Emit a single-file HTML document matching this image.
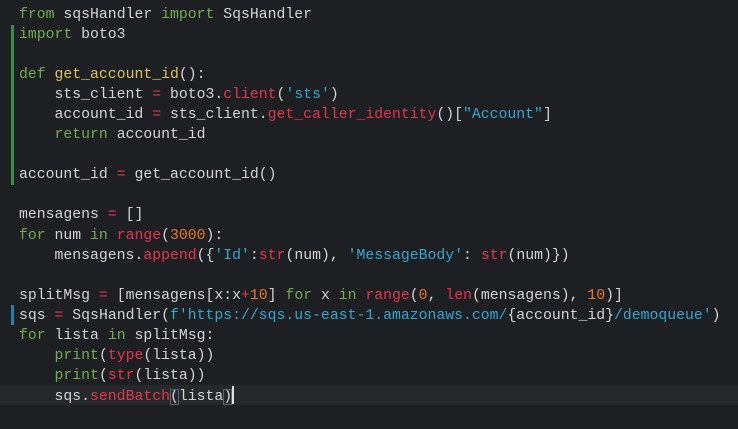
<!DOCTYPE html>
<html><head><meta charset="utf-8"><style>
html,body{margin:0;padding:0;background:#1e1f23;width:738px;height:429px;overflow:hidden}
#c{position:absolute;left:19px;top:5px;font-family:"Liberation Mono",monospace;font-size:14.8px;color:#d4d4d4}
#c div{height:20.05px;line-height:20.05px;white-space:pre;overflow:visible}
.k{color:#6fae4e}.f{color:#dcc25e}.r{color:#e3354d}.s{color:#36a6cf}.n{color:#e4782b}
.cur{position:absolute;left:0;width:738px;top:385px;height:20px;background:#27282c}
.g{position:absolute;left:11px;width:3px;background:#3d8c44}
.b{position:absolute;left:11px;width:3px;background:#2a7fa6}
.br{outline:1px solid #5a6470;outline-offset:-1px}
.caret{display:inline-block;width:2px;height:18px;background:#e0e0e0;vertical-align:-4px}
</style></head><body>
<div class="cur"></div>
<div class="g" style="top:25px;height:160px"></div>
<div class="b" style="top:305px;height:20px"></div>
<div id="c"><div><span class="k">from</span> sqsHandler <span class="k">import</span> SqsHandler</div><div><span class="k">import</span> boto3</div><div> </div><div><span class="k">def</span> <span class="f">get_account_id</span>():</div><div>    sts_client <span class="r">=</span> boto3.<span class="r">client</span>(<span class="s">'sts'</span>)</div><div>    account_id <span class="r">=</span> sts_client.<span class="r">get_caller_identity</span>()[<span class="s">"Account"</span>]</div><div>    <span class="k">return</span> account_id</div><div> </div><div>account_id <span class="r">=</span> get_account_id()</div><div> </div><div>mensagens <span class="r">=</span> []</div><div><span class="k">for</span> num <span class="k">in</span> <span class="r">range</span>(<span class="n">3000</span>):</div><div>    mensagens.<span class="r">append</span>({<span class="s">'Id'</span>:<span class="r">str</span>(num), <span class="s">'MessageBody'</span>: <span class="r">str</span>(num)})</div><div> </div><div>splitMsg <span class="r">=</span> [mensagens[x:x<span class="r">+</span><span class="n">10</span>] <span class="k">for</span> x <span class="k">in</span> <span class="r">range</span>(<span class="n">0</span>, <span class="r">len</span>(mensagens), <span class="n">10</span>)]</div><div>sqs <span class="r">=</span> SqsHandler(<span class="s">f'https://sqs.us-east-1.amazonaws.com/</span>{account_id}<span class="s">/demoqueue'</span>)</div><div><span class="k">for</span> lista <span class="k">in</span> splitMsg:</div><div>    <span class="k">print</span>(<span class="r">type</span>(lista))</div><div>    <span class="k">print</span>(<span class="r">str</span>(lista))</div><div>    sqs.<span class="r">sendBatch</span><span class="br">(</span>lista<span class="br">)</span><span class="caret"></span></div></div>
</body></html>
